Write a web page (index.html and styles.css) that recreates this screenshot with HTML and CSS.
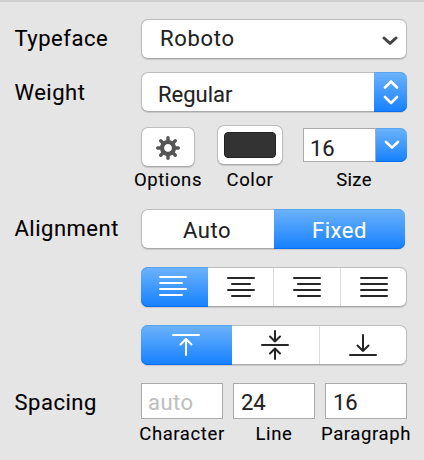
FILE: index.html
```html
<!DOCTYPE html>
<html lang="en">
<head>
<meta charset="utf-8">
<title>Text inspector</title>
<link rel="stylesheet" href="styles.css">
</head>
<body>
<main class="panel">
  <section class="row">
    <div class="label"><span class="t-typeface">Typeface</span></div>
    <div class="control box select typeface"><span class="t-roboto">Roboto</span>
      <svg class="chevron" width="16" height="10" viewBox="0 0 16 10"><path d="M2 2l6 5.4L14 2"/></svg>
    </div>
  </section>
  <section class="row">
    <div class="label"><span class="t-weight">Weight</span></div>
    <div class="control box select weight"><span class="t-regular">Regular</span>
      <div class="stepper blue"><svg width="16" height="26" viewBox="0 0 16 26"><path d="M2 8.500L8 2.500l6 6M2 18L8 24l6-6"/></svg></div>
    </div>
  </section>
  <section class="row tools">
    <div class="label"></div>
    <div class="tool options">
      <div class="box"><svg width="24" height="24" viewBox="-12 -12 24 24"><circle r="6" fill="none" stroke="#555" stroke-width="4.200"/><path d="M0-7.500V-10.300M0 7.500V10.300M-7.500 0H-10.300M7.500 0H10.300M-5.300-5.300L-7.300-7.300M5.300-5.300L7.300-7.300M-5.300 5.300L-7.300 7.300M5.300 5.300L7.300 7.300" stroke="#555" stroke-width="3.400" stroke-linecap="round"/></svg></div>
      <span class="caption t-options">Options</span>
    </div>
    <div class="tool color">
      <div class="box"><div class="swatch"></div></div>
      <span class="caption t-color">Color</span>
    </div>
    <div class="tool size">
      <div class="combo"><div class="field"><span class="num">16</span></div><div class="drop blue"><svg width="16" height="10" viewBox="0 0 16 10"><path d="M2 2l6 5.500L14 2"/></svg></div></div>
      <span class="caption t-size">Size</span>
    </div>
  </section>
  <section class="row">
    <div class="label"><span class="t-alignment">Alignment</span></div>
    <div class="box segments mode">
      <div class="seg"><span class="t-auto">Auto</span></div>
      <div class="seg blue"><span class="t-fixed">Fixed</span></div>
    </div>
  </section>
  <section class="row">
    <div class="label"></div>
    <div class="box segments four">
      <div class="seg blue"><svg width="28" height="22" viewBox="0 0 28 22"><path d="M1 2H27M1 8H23M1 14H27M1 20H23"/></svg></div>
      <div class="seg"><svg width="28" height="22" viewBox="0 0 28 22"><path d="M1 2H27M5 8H23M1 14H27M5 20H23"/></svg></div>
      <div class="seg"><svg width="28" height="22" viewBox="0 0 28 22"><path d="M1 2H27M5 8H27M1 14H27M5 20H27"/></svg></div>
      <div class="seg"><svg width="28" height="22" viewBox="0 0 28 22"><path d="M1 2H27M1 8H27M1 14H27M1 20H27"/></svg></div>
    </div>
  </section>
  <section class="row">
    <div class="label"></div>
    <div class="box segments three">
      <div class="seg blue"><svg width="28" height="30" viewBox="0 0 28 30"><path d="M1 5H27M14 25V9M8.500 14.500L14 9l5.500 5.500"/></svg></div>
      <div class="seg"><svg width="28" height="30" viewBox="0 0 28 30"><path d="M1 15H27M14 1V11M9 6.500L14 11.500 19 6.500M14 29V19M9 23.500L14 18.500 19 23.500"/></svg></div>
      <div class="seg"><svg width="28" height="30" viewBox="0 0 28 30"><path d="M1 25H27M14 5V21M8.500 15.500L14 21l5.500-5.500"/></svg></div>
    </div>
  </section>
  <section class="row spacing">
    <div class="label"><span class="t-spacing">Spacing</span></div>
    <div class="tool entry"><div class="field"><span class="placeholder">auto</span></div><span class="caption t-character">Character</span></div>
    <div class="tool entry"><div class="field"><span class="num">24</span></div><span class="caption t-line">Line</span></div>
    <div class="tool entry"><div class="field"><span class="num">16</span></div><span class="caption t-paragraph">Paragraph</span></div>
  </section>
</main>
</body>
</html>
```
FILE: styles.css
```css
* { box-sizing: border-box; }
body {
  margin: 0;
  background: #e5e5e5;
  color: #000;
  font: 22px/26px Roboto, "Liberation Sans", sans-serif;
  -webkit-text-stroke: .1px;
}
.panel {
  height: 460px;
  padding: 17px 17px 0 14.5px;
  border-top: 2px solid #d0d0d0;
  overflow: hidden;
}
svg { display: block; fill: none; stroke: #262626; stroke-width: 2; stroke-linecap: round; stroke-linejoin: round; }
.row { display: flex; height: 40px; margin-bottom: 18px; }
.row:nth-child(-n+2) { margin-bottom: 13px; }
.row.tools { height: 66px; }
.label { width: 126.5px; flex: none; padding-top: 7px; white-space: nowrap; }
.row:nth-child(2) .label { padding-top: 8px; }
.box {
  background: #fff;
  border: 1px solid #bdbdbd;
  border-bottom-color: #aaa;
  border-radius: 7px;
  box-shadow: 0 1px 1px #0002;
}
.control { width: 266px; }
.select { display: flex; justify-content: space-between; color: #222; }
.typeface { padding: 6px 8px 0 18px; }
.weight { padding: 9px 0 0 16px; }
.chevron { margin-top: 10px; stroke: #444; stroke-width: 3; }
.blue {
  background: linear-gradient(#6db3fa, #1580ff);
  box-shadow: inset 0 1px #57a4f2, inset 0 -1px #0b6df2;
  color: #fff;
}
.blue svg { stroke: #fff; }
.stepper {
  display: flex; align-items: center; justify-content: center;
  width: 33px; height: 40px; margin: -10px -1px -1px 0;
  border-radius: 0 7px 7px 0;
}
.stepper svg { stroke-width: 2.6; }
.tool { display: flex; flex-direction: column; align-items: center; flex: none; }
.tool .box { display: flex; align-items: center; justify-content: center; height: 40px; width: 100%; }
.options { width: 54px; padding-top: 2px; margin-right: 22px; }
.options svg { margin-top: 2px; }
.color { width: 66px; margin-right: 20px; }
.size { width: 104px; padding-top: 3px; }
.swatch { width: 52px; height: 26px; background: #333; border: 1px solid #222; border-radius: 4px; }
.caption { font-size: 18.5px; line-height: 22px; white-space: nowrap; letter-spacing: .6px; }
.t-size { letter-spacing: .3px; margin-right: 2px; }
.options .caption { margin-top: 2px; }
.color .caption { margin-top: 4px; }
.size .caption { margin-top: 7px; }
.combo { display: flex; width: 100%; height: 34px; }
.field { height: 36px; width: 100%; background: #fff; border: 1px solid #aaa; padding: 6px 7px; color: #222; }
.combo .field { width: 73px; height: 34px; padding: 7px 6px 0; }
.entry .field { padding-top: 6px; padding-bottom: 0; }
.drop { display: flex; align-items: center; justify-content: center; width: 31px; border-radius: 0 7px 7px 0; }
.drop svg { stroke-width: 2.6; }
.segments { display: flex; width: 266px; }
.mode { width: 264px; }
.seg { flex: 1; display: flex; align-items: center; justify-content: center; border-left: 1px solid #ddd; }
.seg:first-child, .seg.blue, .seg.blue + .seg { border-left: 0; }
.seg.blue { margin: -1px 0; }
.seg.blue:first-child { margin-left: -1px; border-radius: 7px 0 0 7px; }
.seg.blue:last-child { margin-right: -1px; border-radius: 0 7px 7px 0; }
.mode .seg { padding-top: 3px; }
.mode .seg:first-child { flex: none; width: 132px; color: #222; padding-right: 2px; }
.three .seg:first-child { flex: none; width: 91px; padding-right: 2px; }
.three .seg:nth-child(2) { padding-right: 1px; }
.three .seg:last-child { flex: none; width: 87px; }
.four .seg { padding-bottom: 1px; padding-left: 1px; }
.four .seg:first-child { flex: none; width: 67px; padding: 0 3px 2px 0; }
.spacing { gap: 10px; height: 66px; margin-bottom: 0; }
.spacing .label { width: 116.5px; }
.entry { width: 82px; }
.entry .caption { margin-top: 4px; }
.placeholder { color: #bfbfbf; margin-left: -1px; }
.label, .t-roboto, .t-auto, .t-fixed, .placeholder { letter-spacing: .5px; }
.t-roboto { letter-spacing: .7px; }
.t-regular { letter-spacing: 0; }
```
